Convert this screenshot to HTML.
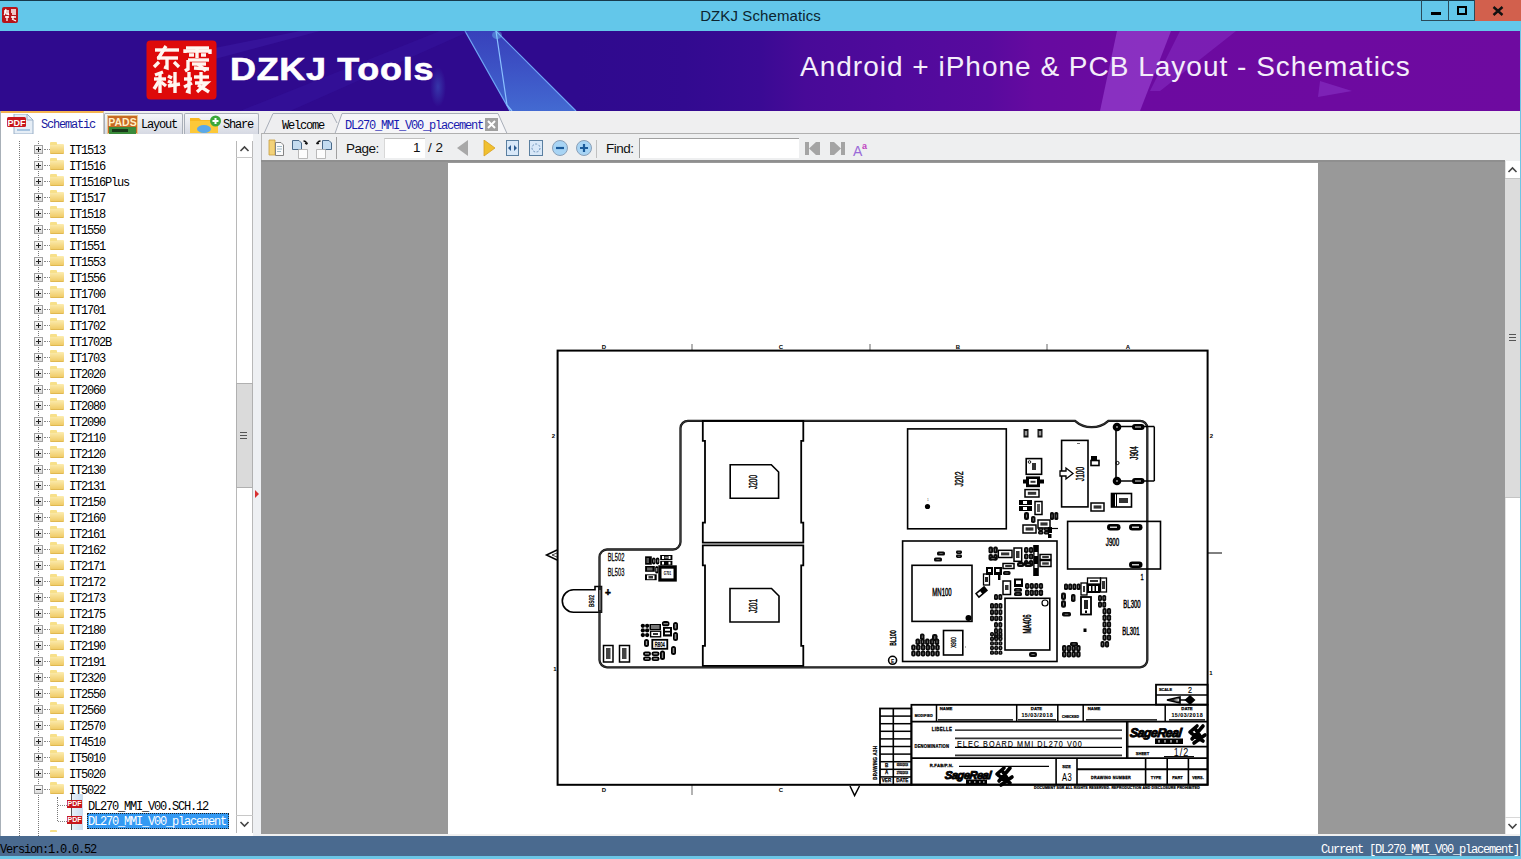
<!DOCTYPE html>
<html><head><meta charset="utf-8"><style>
*{margin:0;padding:0;box-sizing:border-box}
html,body{width:1521px;height:859px;overflow:hidden;background:#f0f0f0;font-family:"Liberation Sans",sans-serif}
.a{position:absolute}
#tb{left:0;top:0;width:1521px;height:31px;background:#63c7ea;border-top:1px solid #173a4c}
#tbt{left:0;top:7px;width:1521px;text-align:center;font-size:15px;color:#0c2430;letter-spacing:0.1px}
.wb{top:0;height:21px;border:1px solid #2a4a5a;border-top:none}
#banner{left:0;top:31px;width:1520px;height:80px;background:linear-gradient(90deg,#2f0a8e 0%,#2f0a8e 38%,#320a90 45%,#3a0a94 50%,#480a98 53%,#500a9c 59%,#580a9e 65%,#660aa0 68%,#6c0aa0 75%,#6e0aa0 100%)}
#rb{left:1520px;top:31px;width:1px;height:828px;background:#6cc6e6}
#tabs{left:0;top:111px;width:1520px;height:23px;background:#efeff0}
.tree{left:0;top:134px;width:253px;height:702px;background:#fff;border-left:1px solid #a8a8a8;overflow:hidden}
.pb{position:absolute;left:34px;width:9px;height:9px;border:1px solid #a0a0a0;background:linear-gradient(#fbfbfb,#dcdcdc)}
.pb .ph{position:absolute;left:1px;top:3px;width:5px;height:1px;background:#222}
.pb .pv{position:absolute;left:3px;top:1px;width:1px;height:5px;background:#222}
.hd{position:absolute;left:44px;width:6px;height:1px;border-top:1px dotted #888}
.hd2{position:absolute;left:58px;width:9px;height:1px;border-top:1px dotted #888}
.fd{position:absolute;left:50px;width:14px;height:10px;background:linear-gradient(#fcecb0,#f0cc68);border-radius:1px;border-bottom:1px solid #e0b850}
.fd i{position:absolute;left:0;top:-2px;width:7px;height:3px;background:#f7e08a;border-radius:1px 1px 0 0}
.tx{position:absolute;left:69px;height:16px;font-family:"Liberation Mono",monospace;font-size:12px;letter-spacing:-1.2px;color:#000;line-height:17px}
.tx2{position:absolute;left:88px;height:16px;font-family:"Liberation Mono",monospace;font-size:12px;letter-spacing:-1.2px;color:#000;line-height:17px}
.sel{background:#3399f3;color:#fff;outline:1px dotted #222;outline-offset:-1px;width:142px;left:87px;padding-left:1px;top:813px!important;height:16px;line-height:19px}
.pdfi{position:absolute;left:67px;width:16px;height:16px}
.pdfi b{position:absolute;left:4px;top:-3px;width:12px;height:20px;background:linear-gradient(90deg,#e8f0f8,#c8dcf0);border-left:1px solid #555}
.pdfi span{position:absolute;left:0;top:3px;width:15px;height:8px;background:#c8161c;color:#fff;font-size:7px;font-weight:bold;line-height:8px;text-align:center}
.vdot{position:absolute;width:1px;border-left:1px dotted #777}
#split{left:253px;top:134px;width:8px;height:702px;background:#eef0f3}
#tool{left:261px;top:133px;width:1259px;height:28px;background:#eeeff0;border-left:1px solid #b8b8b8;border-top:1px solid #b0b0b0}
#doc{left:261px;top:160px;width:1244px;height:674px;background:#999999;border-top:2px solid #8f8f8f}
#page{left:448px;top:163px;width:870px;height:671px;background:#fff}
#vs{left:1505px;top:161px;width:15px;height:673px;background:#fff;border-left:1px solid #e4e4e4}
#status{left:0;top:836px;width:1520px;height:20px;background:#4a6a8f}
#bb{left:0;top:856px;width:1521px;height:3px;background:#6cc6e6}
.st{top:841px;height:18px;line-height:19px;font-family:"Liberation Mono",monospace;font-size:12px;letter-spacing:-1.2px;color:#000}
.tab{top:113px;height:21px;border:1px solid #a8aeb8;border-bottom:none;border-radius:2px 2px 0 0;background:linear-gradient(#f6f7fa,#d6d9e3)}
.tt{font-family:"Liberation Mono",monospace;font-size:12px;letter-spacing:-1.2px;color:#000;line-height:14px}
.tl{font-size:13.5px;color:#111;line-height:16px}
.ibtn{border:1px solid #5a7fa8;background:linear-gradient(#eaf3fb,#bcd6ee)}
</style></head>
<body>
<div id="tb" class="a"></div>
<div id="tbt" class="a">DZKJ Schematics</div>
<svg class="a" style="left:2px;top:7px" width="16" height="16" viewBox="0 0 16 16" ><rect x="0" y="0" width="16" height="16" rx="2" fill="#b8141a"/><g stroke="#fff" stroke-width="1.3" fill="none"><path d="M2 4 H7 M4 2 L3 6 M2 6 H7 M5 6 V8 M3 7 L2 8 M6 7 L7 8"/><path d="M9 3 H14 M9 5 H14 M10 7 H14 M3 10 H7 M5 9 V14 M9 10 H14 M11 9 V13 M10 12 L14 14"/></g></svg>
<div class="a wb" style="left:1421px;width:28px"><div class="a" style="left:9px;top:12px;width:10px;height:3px;background:#000"></div></div>
<div class="a wb" style="left:1448px;width:27px;border-left:1px solid #2a4a5a"><div class="a" style="left:8px;top:6px;width:10px;height:9px;border:2px solid #000"></div></div>
<div class="a" style="left:1475px;top:0;width:46px;height:21px;background:#d2604d"><svg class="a" style="left:17px;top:6px" width="12" height="10" viewBox="0 0 12 10" ><path d="M1.5 1 L10.5 9 M10.5 1 L1.5 9" stroke="#111" stroke-width="2.4"/></svg></div>
<div id="banner" class="a"></div>
<svg class="a" style="left:0px;top:31px" width="1520" height="80" viewBox="0 0 1520 80" >
<defs><radialGradient id="glow" cx="0.5" cy="0.5" r="0.5"><stop offset="0" stop-color="#4aa8f0" stop-opacity="0.8"/><stop offset="1" stop-color="#4aa8f0" stop-opacity="0"/></radialGradient>
<linearGradient id="dg" x1="0" y1="0" x2="0" y2="1"><stop offset="0" stop-color="#3f6ee0" stop-opacity="0.55"/><stop offset="1" stop-color="#4a8ae8" stop-opacity="0.75"/></linearGradient></defs>
<polygon points="465,0 496,0 576,80 510,80" fill="url(#dg)"/>
<polyline points="465,0 510,80" stroke="#6fa6f5" stroke-width="1.2" fill="none"/>
<polyline points="496,0 576,80" stroke="#6fa6f5" stroke-width="1.2" fill="none"/>
<polyline points="496,0 507,74 512,80" stroke="#8ac0ff" stroke-width="1.2" fill="none"/>
<ellipse cx="438" cy="56" rx="8" ry="20" fill="url(#glow)" opacity="0.35"/>
<ellipse cx="497" cy="4" rx="5" ry="4" fill="#7fe0ff" opacity="0.35"/>
<polygon points="1117,0 1171,0 1140,80 1100,80" fill="#b060e8" opacity="0.45"/>
<polygon points="1180,0 1236,0 1160,60 1150,60" fill="#9a50e0" opacity="0.3"/>
<polygon points="1320,50 1352,60 1318,66" fill="#9a50e0" opacity="0.35"/>
<polygon points="150,30 300,0 320,0 170,40" fill="#4a30c0" opacity="0.25"/>
<polygon points="240,80 440,0 470,0 290,80" fill="#3a20b0" opacity="0.25"/>
</svg>
<svg class="a" style="left:146px;top:40px" width="72" height="61" viewBox="0 0 72 61" >
<rect x="0.5" y="0.5" width="70" height="59" rx="4" fill="#de0a0a"/>
<g stroke="#fff6f0" stroke-width="3.4" fill="none" stroke-linecap="butt">
 <!-- 东 -->
 <path d="M9 10 H33"/><path d="M20 6 L12 19"/><path d="M11 18 H32"/><path d="M21 18 V28 L18 27"/><path d="M13 22 L8 27"/><path d="M28 22 L33 27"/>
 <!-- 震 -->
 <path d="M40 8 H63"/><path d="M39 13 V11 H64 V14"/><path d="M51 8 V18"/><path d="M43 15 H48 M55 15 H60"/><path d="M42 20 H63"/><path d="M42 20 V29 L39 31"/><path d="M46 24 H60"/><path d="M48 28 L63 29"/><path d="M52 24 L60 31"/>
 <!-- 科 -->
 <path d="M17 32 L9 35"/><path d="M8 39 H20"/><path d="M14 34 V53"/><path d="M13 41 L8 49"/><path d="M15 42 L20 46"/><path d="M22 36 L26 38 M22 41 L26 43"/><path d="M22 46 L34 44"/><path d="M29 32 V53"/>
 <!-- 技 -->
 <path d="M38 39 H46"/><path d="M43 32 V52 L40 51"/><path d="M38 47 L46 43"/><path d="M48 37 H63"/><path d="M55 32 V42"/><path d="M49 43 H61 L51 52"/><path d="M52 45 L63 52"/>
</g></svg>
<div class="a" id="dzt" style="left:230px;top:50px;font-size:31px;font-weight:bold;color:#fff;line-height:40px;white-space:nowrap;letter-spacing:0.6px;transform:scaleX(1.16);transform-origin:0 0;-webkit-text-stroke:0.6px #fff">DZKJ Tools</div>
<div class="a" id="apt" style="left:800px;top:50px;font-size:28px;color:#f4eefa;line-height:34px;white-space:nowrap;letter-spacing:1.0px">Android + iPhone &amp; PCB Layout - Schematics</div>
<div id="rb" class="a"></div>
<div id="tabs" class="a"></div>
<div class="a" style="left:1px;top:111px;width:103px;height:24px;background:#fff;border-top:2px solid #f4b450;border-right:1px solid #c8c8c8"></div>
<svg class="a" style="left:7px;top:114px" width="30" height="22" viewBox="0 0 30 22" ><path d="M7 0 H20 L26 6 V20 H7 Z" fill="#e6eef6" stroke="#9ab0c8" stroke-width="1"/><path d="M20 0 V6 H26" fill="none" stroke="#9ab0c8"/>
<rect x="0" y="3" width="19" height="10" rx="1.5" fill="#c8161c"/><text x="9.5" y="11.5" text-anchor="middle" font-size="9" font-weight="bold" fill="#fff" font-family="Liberation Sans">PDF</text>
<path d="M10 16 H23" stroke="#a8c4e0" stroke-width="2"/></svg>
<div class="a tt" style="left:41px;top:118px;color:#1a1aa0">Schematic</div>
<div class="a tab" style="left:104px;width:79px"></div>
<svg class="a" style="left:107px;top:115px" width="31" height="19" viewBox="0 0 31 19" ><rect x="0.5" y="0.5" width="30" height="18" fill="#c86a24" stroke="#e8c890"/><text x="15.5" y="11" text-anchor="middle" font-size="10.5" font-weight="bold" fill="#fff0c8" font-family="Liberation Sans">PADS</text>
<rect x="2" y="12" width="27" height="7" fill="#3a8a3a"/><rect x="5" y="14" width="16" height="3" fill="#1a3a1a"/></svg>
<div class="a tt" style="left:141px;top:118px">Layout</div>
<div class="a tab" style="left:184px;width:75px"></div>
<svg class="a" style="left:190px;top:115px" width="32" height="19" viewBox="0 0 32 19" ><path d="M0 3 H9 L11 5 H28 V18 H0 Z" fill="#f8b820"/><path d="M0 6 H28 V18 H0 Z" fill="#fcc838"/>
<ellipse cx="14" cy="14" rx="7" ry="4" fill="#5aa8e8"/><circle cx="25.5" cy="6" r="5.5" fill="#3aa83a"/><path d="M25.5 3 V9 M22.5 6 H28.5" stroke="#fff" stroke-width="2"/></svg>
<div class="a tt" style="left:223px;top:118px">Share</div>
<svg class="a" style="left:263px;top:113px" width="250" height="22" viewBox="0 0 250 22" ><path d="M1 20.5 L10 0.5 H69 L74 10" fill="#eeeef0" stroke="#a8aeb8" stroke-width="1"/>
<path d="M72 20.5 L79 0.5 H235 L244 20.5" fill="#f6f6f8" stroke="#a8aeb8" stroke-width="1"/>
<rect x="222" y="5" width="13" height="13" fill="#a0a0a0"/><path d="M225 8 L232 15 M232 8 L225 15" stroke="#fff" stroke-width="2"/></svg>
<div class="a tt" style="left:282px;top:119px">Welcome</div>
<div class="a tt" style="left:345px;top:119px;color:#1a1ab0">DL270_MMI_V00_placement</div>
<div class="tree a">
<div class="vdot" style="left:18px;top:7px;height:695px"></div>
<div class="vdot" style="left:37px;top:7px;height:695px"></div>
<div class="vdot" style="left:56px;top:663px;height:24px"></div>
</div>
<div class="a" style="left:0;top:0;width:236px;height:832px;overflow:hidden"><div class="pb" style="top:145px"><i class="ph"></i><i class="pv"></i></div>
<div class="hd" style="top:149px"></div>
<div class="fd" style="top:144px"><i></i></div>
<div class="tx" style="top:143px">IT1513</div>
<div class="pb" style="top:161px"><i class="ph"></i><i class="pv"></i></div>
<div class="hd" style="top:165px"></div>
<div class="fd" style="top:160px"><i></i></div>
<div class="tx" style="top:159px">IT1516</div>
<div class="pb" style="top:177px"><i class="ph"></i><i class="pv"></i></div>
<div class="hd" style="top:181px"></div>
<div class="fd" style="top:176px"><i></i></div>
<div class="tx" style="top:175px">IT1516Plus</div>
<div class="pb" style="top:193px"><i class="ph"></i><i class="pv"></i></div>
<div class="hd" style="top:197px"></div>
<div class="fd" style="top:192px"><i></i></div>
<div class="tx" style="top:191px">IT1517</div>
<div class="pb" style="top:209px"><i class="ph"></i><i class="pv"></i></div>
<div class="hd" style="top:213px"></div>
<div class="fd" style="top:208px"><i></i></div>
<div class="tx" style="top:207px">IT1518</div>
<div class="pb" style="top:225px"><i class="ph"></i><i class="pv"></i></div>
<div class="hd" style="top:229px"></div>
<div class="fd" style="top:224px"><i></i></div>
<div class="tx" style="top:223px">IT1550</div>
<div class="pb" style="top:241px"><i class="ph"></i><i class="pv"></i></div>
<div class="hd" style="top:245px"></div>
<div class="fd" style="top:240px"><i></i></div>
<div class="tx" style="top:239px">IT1551</div>
<div class="pb" style="top:257px"><i class="ph"></i><i class="pv"></i></div>
<div class="hd" style="top:261px"></div>
<div class="fd" style="top:256px"><i></i></div>
<div class="tx" style="top:255px">IT1553</div>
<div class="pb" style="top:273px"><i class="ph"></i><i class="pv"></i></div>
<div class="hd" style="top:277px"></div>
<div class="fd" style="top:272px"><i></i></div>
<div class="tx" style="top:271px">IT1556</div>
<div class="pb" style="top:289px"><i class="ph"></i><i class="pv"></i></div>
<div class="hd" style="top:293px"></div>
<div class="fd" style="top:288px"><i></i></div>
<div class="tx" style="top:287px">IT1700</div>
<div class="pb" style="top:305px"><i class="ph"></i><i class="pv"></i></div>
<div class="hd" style="top:309px"></div>
<div class="fd" style="top:304px"><i></i></div>
<div class="tx" style="top:303px">IT1701</div>
<div class="pb" style="top:321px"><i class="ph"></i><i class="pv"></i></div>
<div class="hd" style="top:325px"></div>
<div class="fd" style="top:320px"><i></i></div>
<div class="tx" style="top:319px">IT1702</div>
<div class="pb" style="top:337px"><i class="ph"></i><i class="pv"></i></div>
<div class="hd" style="top:341px"></div>
<div class="fd" style="top:336px"><i></i></div>
<div class="tx" style="top:335px">IT1702B</div>
<div class="pb" style="top:353px"><i class="ph"></i><i class="pv"></i></div>
<div class="hd" style="top:357px"></div>
<div class="fd" style="top:352px"><i></i></div>
<div class="tx" style="top:351px">IT1703</div>
<div class="pb" style="top:369px"><i class="ph"></i><i class="pv"></i></div>
<div class="hd" style="top:373px"></div>
<div class="fd" style="top:368px"><i></i></div>
<div class="tx" style="top:367px">IT2020</div>
<div class="pb" style="top:385px"><i class="ph"></i><i class="pv"></i></div>
<div class="hd" style="top:389px"></div>
<div class="fd" style="top:384px"><i></i></div>
<div class="tx" style="top:383px">IT2060</div>
<div class="pb" style="top:401px"><i class="ph"></i><i class="pv"></i></div>
<div class="hd" style="top:405px"></div>
<div class="fd" style="top:400px"><i></i></div>
<div class="tx" style="top:399px">IT2080</div>
<div class="pb" style="top:417px"><i class="ph"></i><i class="pv"></i></div>
<div class="hd" style="top:421px"></div>
<div class="fd" style="top:416px"><i></i></div>
<div class="tx" style="top:415px">IT2090</div>
<div class="pb" style="top:433px"><i class="ph"></i><i class="pv"></i></div>
<div class="hd" style="top:437px"></div>
<div class="fd" style="top:432px"><i></i></div>
<div class="tx" style="top:431px">IT2110</div>
<div class="pb" style="top:449px"><i class="ph"></i><i class="pv"></i></div>
<div class="hd" style="top:453px"></div>
<div class="fd" style="top:448px"><i></i></div>
<div class="tx" style="top:447px">IT2120</div>
<div class="pb" style="top:465px"><i class="ph"></i><i class="pv"></i></div>
<div class="hd" style="top:469px"></div>
<div class="fd" style="top:464px"><i></i></div>
<div class="tx" style="top:463px">IT2130</div>
<div class="pb" style="top:481px"><i class="ph"></i><i class="pv"></i></div>
<div class="hd" style="top:485px"></div>
<div class="fd" style="top:480px"><i></i></div>
<div class="tx" style="top:479px">IT2131</div>
<div class="pb" style="top:497px"><i class="ph"></i><i class="pv"></i></div>
<div class="hd" style="top:501px"></div>
<div class="fd" style="top:496px"><i></i></div>
<div class="tx" style="top:495px">IT2150</div>
<div class="pb" style="top:513px"><i class="ph"></i><i class="pv"></i></div>
<div class="hd" style="top:517px"></div>
<div class="fd" style="top:512px"><i></i></div>
<div class="tx" style="top:511px">IT2160</div>
<div class="pb" style="top:529px"><i class="ph"></i><i class="pv"></i></div>
<div class="hd" style="top:533px"></div>
<div class="fd" style="top:528px"><i></i></div>
<div class="tx" style="top:527px">IT2161</div>
<div class="pb" style="top:545px"><i class="ph"></i><i class="pv"></i></div>
<div class="hd" style="top:549px"></div>
<div class="fd" style="top:544px"><i></i></div>
<div class="tx" style="top:543px">IT2162</div>
<div class="pb" style="top:561px"><i class="ph"></i><i class="pv"></i></div>
<div class="hd" style="top:565px"></div>
<div class="fd" style="top:560px"><i></i></div>
<div class="tx" style="top:559px">IT2171</div>
<div class="pb" style="top:577px"><i class="ph"></i><i class="pv"></i></div>
<div class="hd" style="top:581px"></div>
<div class="fd" style="top:576px"><i></i></div>
<div class="tx" style="top:575px">IT2172</div>
<div class="pb" style="top:593px"><i class="ph"></i><i class="pv"></i></div>
<div class="hd" style="top:597px"></div>
<div class="fd" style="top:592px"><i></i></div>
<div class="tx" style="top:591px">IT2173</div>
<div class="pb" style="top:609px"><i class="ph"></i><i class="pv"></i></div>
<div class="hd" style="top:613px"></div>
<div class="fd" style="top:608px"><i></i></div>
<div class="tx" style="top:607px">IT2175</div>
<div class="pb" style="top:625px"><i class="ph"></i><i class="pv"></i></div>
<div class="hd" style="top:629px"></div>
<div class="fd" style="top:624px"><i></i></div>
<div class="tx" style="top:623px">IT2180</div>
<div class="pb" style="top:641px"><i class="ph"></i><i class="pv"></i></div>
<div class="hd" style="top:645px"></div>
<div class="fd" style="top:640px"><i></i></div>
<div class="tx" style="top:639px">IT2190</div>
<div class="pb" style="top:657px"><i class="ph"></i><i class="pv"></i></div>
<div class="hd" style="top:661px"></div>
<div class="fd" style="top:656px"><i></i></div>
<div class="tx" style="top:655px">IT2191</div>
<div class="pb" style="top:673px"><i class="ph"></i><i class="pv"></i></div>
<div class="hd" style="top:677px"></div>
<div class="fd" style="top:672px"><i></i></div>
<div class="tx" style="top:671px">IT2320</div>
<div class="pb" style="top:689px"><i class="ph"></i><i class="pv"></i></div>
<div class="hd" style="top:693px"></div>
<div class="fd" style="top:688px"><i></i></div>
<div class="tx" style="top:687px">IT2550</div>
<div class="pb" style="top:705px"><i class="ph"></i><i class="pv"></i></div>
<div class="hd" style="top:709px"></div>
<div class="fd" style="top:704px"><i></i></div>
<div class="tx" style="top:703px">IT2560</div>
<div class="pb" style="top:721px"><i class="ph"></i><i class="pv"></i></div>
<div class="hd" style="top:725px"></div>
<div class="fd" style="top:720px"><i></i></div>
<div class="tx" style="top:719px">IT2570</div>
<div class="pb" style="top:737px"><i class="ph"></i><i class="pv"></i></div>
<div class="hd" style="top:741px"></div>
<div class="fd" style="top:736px"><i></i></div>
<div class="tx" style="top:735px">IT4510</div>
<div class="pb" style="top:753px"><i class="ph"></i><i class="pv"></i></div>
<div class="hd" style="top:757px"></div>
<div class="fd" style="top:752px"><i></i></div>
<div class="tx" style="top:751px">IT5010</div>
<div class="pb" style="top:769px"><i class="ph"></i><i class="pv"></i></div>
<div class="hd" style="top:773px"></div>
<div class="fd" style="top:768px"><i></i></div>
<div class="tx" style="top:767px">IT5020</div>
<div class="pb" style="top:785px"><i class="ph"></i></div>
<div class="hd" style="top:789px"></div>
<div class="fd" style="top:784px"><i></i></div>
<div class="tx" style="top:783px">IT5022</div>
<div class="pb" style="top:833px"><i class="ph"></i><i class="pv"></i></div>
<div class="hd" style="top:837px"></div>
<div class="fd" style="top:832px"><i></i></div>
<div class="tx" style="top:831px">IT5030</div>
<div class="hd2" style="top:805px"></div>
<div class="pdfi" style="top:797px"><b></b><span>PDF</span></div>
<div class="tx2" style="top:799px">DL270_MMI_V00.SCH.12</div>
<div class="hd2" style="top:821px"></div>
<div class="pdfi" style="top:813px"><b></b><span>PDF</span></div>
<div class="tx2 sel" style="top:815px">DL270_MMI_V00_placement</div></div>
<div id="split" class="a"></div>
<div class="a" style="left:0;top:111px;width:1px;height:725px;background:#a8b0b8"></div>
<div id="tool" class="a"></div>
<svg class="a" style="left:268px;top:137px" width="80" height="25" viewBox="0 0 80 25" >
<path d="M1 3 H7 V18 H1 Z" fill="#f2d27a" stroke="#c8a040" stroke-width="0.8"/><path d="M7.5 5.5 H13 L15.5 8 V18.5 H7.5 Z" fill="#fafafa" stroke="#777" stroke-width="0.9"/><path d="M9 9.5 H14 M9 12 H14 M9 14.5 H13" stroke="#8ab" stroke-width="0.8"/>
<path d="M24.5 3.5 H31 L33.5 6 V12.5 H24.5 Z" fill="#c4dcf0" stroke="#4a6a8a" stroke-width="1"/><path d="M30.5 12.5 H39.5 V21.5 H30.5 Z" fill="#fcfcfc" stroke="#aaa" stroke-width="0.8"/><path d="M35.5 4 Q38.5 4 38.5 7 L37 6.2 M38.5 7 L39.6 5.8" stroke="#111" fill="none" stroke-width="1.3"/>
<path d="M54.5 3.5 H61 L63.5 6 V12.5 H54.5 Z" fill="#c4dcf0" stroke="#4a6a8a" stroke-width="1"/><path d="M48.5 12.5 H57.5 V21.5 H48.5 Z" fill="#fcfcfc" stroke="#aaa" stroke-width="0.8"/><path d="M52.5 4 Q49.5 4 49.5 7 M49.5 7 L48.4 5.8 M49.5 7 L51 6.2" stroke="#111" fill="none" stroke-width="1.3"/>
<path d="M68.5 -1 V22" stroke="#a0a0a0"/>
</svg>
<div class="a tl" style="left:346px;top:141px;letter-spacing:-0.5px">Page:</div>
<div class="a" style="left:384px;top:138px;width:41px;height:20px;background:#fff;border-top:1px solid #c0c0c0;border-left:1px solid #d8d8d8"></div>
<div class="a tl" style="left:413px;top:140px">1</div>
<div class="a tl" style="left:428px;top:140px">/ 2</div>
<svg class="a" style="left:457px;top:140px" width="145" height="18" viewBox="0 0 145 18" >
<path d="M0 8 L11 0 V16 Z" fill="#a8a8a8"/>
<path d="M27 0 L38 8 L27 16 Z" fill="#f0c030" stroke="#d8a020" stroke-width="0.8"/>
<rect x="49.5" y="0.5" width="12" height="15" fill="#d8e8f8" stroke="#5a7fa0"/><path d="M51 8 L54 5 V11 Z M60 8 L57 5 V11 Z" fill="#2a5a90"/>
<rect x="72.5" y="0.5" width="13" height="15" fill="#d8e8f8" stroke="#5a7fa0"/><circle cx="79" cy="8" r="4" fill="none" stroke="#6a90b8" stroke-dasharray="2 1.5"/>
<circle cx="103" cy="8" r="7.5" fill="#a8d4f4" stroke="#8aa0b8"/><path d="M99 8 H107" stroke="#1a5a9a" stroke-width="2.2"/>
<circle cx="127" cy="8" r="7.5" fill="#a8d4f4" stroke="#8aa0b8"/><path d="M123 8 H131 M127 4 V12" stroke="#1a5a9a" stroke-width="2.2"/>
<path d="M139.5 -3 V20" stroke="#c0c0c0"/>
</svg>
<div class="a tl" style="left:606px;top:141px;letter-spacing:-0.5px">Find:</div>
<div class="a" style="left:639px;top:138px;width:160px;height:20px;background:#fff;border-top:1px solid #a0a0a0;border-left:1px solid #a0a0a0"></div>
<svg class="a" style="left:805px;top:140px" width="70" height="18" viewBox="0 0 70 18" >
<path d="M0 2 H4 V15 H0 Z M4 8.5 L11 2 H15 V15 H11 Z" fill="#a4a4a4"/>
<path d="M40 2 H36 V15 H40 Z M36 8.5 L29 2 H25 V15 H29 Z" fill="#a4a4a4"/>
<text x="48" y="16" font-size="14" fill="#9a6ad8" font-family="Liberation Sans">A</text><text x="57" y="9" font-size="9" fill="#c040c0" font-family="Liberation Sans" font-weight="bold">a</text>
</svg>
<div id="doc" class="a"></div>
<div id="page" class="a"></div>
<div class="a" style="left:236px;top:141px;width:17px;height:692px;background:#fff;border-left:1px solid #b8b8b8;border-right:1px solid #b8b8b8"></div>
<div class="a" style="left:236px;top:157px;width:17px;height:1px;background:#c8c8c8"></div>
<div class="a" style="left:236px;top:383px;width:17px;height:105px;background:#dadada;border:1px solid #b0b0b0"></div>
<div class="a" style="left:240px;top:432px;width:7px;height:7px;border-top:1px solid #555;border-bottom:1px solid #555"><i class="a" style="left:0;top:2px;width:7px;height:1px;background:#555"></i></div>
<div class="a" style="left:236px;top:815px;width:17px;height:1px;background:#c8c8c8"></div>
<svg class="a" style="left:236px;top:141px" width="17" height="16" viewBox="0 0 17 16" ><path d="M4.5 10 L8.5 6 L12.5 10" stroke="#444" stroke-width="1.6" fill="none"/></svg>
<svg class="a" style="left:236px;top:816px" width="17" height="16" viewBox="0 0 17 16" ><path d="M4.5 6 L8.5 10 L12.5 6" stroke="#444" stroke-width="1.6" fill="none"/></svg>
<svg class="a" style="left:254px;top:489px" width="6" height="10" viewBox="0 0 6 10" ><path d="M1 1 L5 5 L1 9 Z" fill="#d83030"/></svg>
<div id="vs" class="a"></div>
<div class="a" style="left:1505px;top:178px;width:15px;height:320px;background:#dcdcdc;border-top:1px solid #c4c4c4;border-bottom:1px solid #c4c4c4"></div>
<div class="a" style="left:1509px;top:334px;width:7px;height:7px;border-top:1px solid #555;border-bottom:1px solid #555"><i class="a" style="left:0;top:2px;width:7px;height:1px;background:#555"></i></div>
<svg class="a" style="left:1505px;top:162px" width="15" height="16" viewBox="0 0 15 16" ><path d="M3.5 10 L7.5 6 L11.5 10" stroke="#444" stroke-width="1.6" fill="none"/></svg>
<svg class="a" style="left:1505px;top:818px" width="15" height="16" viewBox="0 0 15 16" ><path d="M3.5 6 L7.5 10 L11.5 6" stroke="#444" stroke-width="1.6" fill="none"/></svg>
<div class="a" style="left:1505px;top:817px;width:15px;height:1px;background:#d8d8d8"></div>
<div id="status" class="a"></div>
<div id="bb" class="a"></div>
<div class="a st" style="left:0">Version:1.0.0.52</div>
<div class="a st" style="left:1321px;color:#fff">Current [DL270_MMI_V00_placement]</div>
<svg class="a" style="left:448px;top:162px" width="870" height="672" viewBox="448 162 870 672"><rect x="557.6" y="350.6" width="649.9999999999999" height="434.19999999999993" fill="none" stroke="#000" stroke-width="2.0"/>
<line x1="692" y1="344" x2="692" y2="351" stroke="#000" stroke-width="0.6"/>
<line x1="870" y1="344" x2="870" y2="351" stroke="#000" stroke-width="0.6"/>
<line x1="1047" y1="344" x2="1047" y2="351" stroke="#000" stroke-width="0.6"/>
<line x1="692" y1="785" x2="692" y2="795" stroke="#000" stroke-width="0.6"/>
<text transform="translate(604 347)" font-size="6" text-anchor="middle" dominant-baseline="central" font-weight="bold" fill="#000" font-family="Liberation Sans">D</text>
<text transform="translate(781 347)" font-size="6" text-anchor="middle" dominant-baseline="central" font-weight="bold" fill="#000" font-family="Liberation Sans">C</text>
<text transform="translate(958 347)" font-size="6" text-anchor="middle" dominant-baseline="central" font-weight="bold" fill="#000" font-family="Liberation Sans">B</text>
<text transform="translate(1128 347)" font-size="6" text-anchor="middle" dominant-baseline="central" font-weight="bold" fill="#000" font-family="Liberation Sans">A</text>
<text transform="translate(604 789.5)" font-size="6" text-anchor="middle" dominant-baseline="central" font-weight="bold" fill="#000" font-family="Liberation Sans">D</text>
<text transform="translate(781 789.5)" font-size="6" text-anchor="middle" dominant-baseline="central" font-weight="bold" fill="#000" font-family="Liberation Sans">C</text>
<text transform="translate(553.5 436)" font-size="6" text-anchor="middle" dominant-baseline="central" font-weight="bold" fill="#000" font-family="Liberation Sans">2</text>
<text transform="translate(1211.5 436)" font-size="6" text-anchor="middle" dominant-baseline="central" font-weight="bold" fill="#000" font-family="Liberation Sans">2</text>
<text transform="translate(555 669)" font-size="6" text-anchor="middle" dominant-baseline="central" font-weight="bold" fill="#000" font-family="Liberation Sans">1</text>
<text transform="translate(1211 673)" font-size="6" text-anchor="middle" dominant-baseline="central" font-weight="bold" fill="#000" font-family="Liberation Sans">1</text>
<path d="M557 550 L546.5 555 L557 560" fill="none" stroke="#000" stroke-width="1.5"/>
<path d="M557 553 L552 555 L557 557" fill="none" stroke="#000" stroke-width="0.7"/>
<line x1="1207" y1="553" x2="1222" y2="553" stroke="#000" stroke-width="1.0"/>
<path d="M850 786 L854.6 795.5 L859.5 786" fill="none" stroke="#000" stroke-width="1.5"/>
<path d="M680.5 428 A7.5 7.5 0 0 1 688 420.8 L1075 420.8 A25 25 0 0 0 1108.4 420.8 L1140 420.8 A7.3 7.3 0 0 1 1147.3 428 L1147.3 660 A7.3 7.3 0 0 1 1140 667.3 L607 667.3 A7.5 7.5 0 0 1 599.5 660 L599.5 557 A7.5 7.5 0 0 1 607 549.5 L673 549.5 A7.5 7.5 0 0 0 680.5 542 Z" fill="none" stroke="#111" stroke-width="2.3"/>
<path d="M680.5 428 A7.5 7.5 0 0 1 688 420.8 L1075 420.8 A25 25 0 0 0 1108.4 420.8 L1140 420.8 A7.3 7.3 0 0 1 1147.3 428 L1147.3 660 A7.3 7.3 0 0 1 1140 667.3 L607 667.3 A7.5 7.5 0 0 1 599.5 660 L599.5 557 A7.5 7.5 0 0 1 607 549.5 L673 549.5 A7.5 7.5 0 0 0 680.5 542 Z" fill="none" stroke="#666" stroke-width="0.45"/>
<path d="M702.8 420.8 V440.8 H705 V522.7 H702.8 V542.7 H803.3 V522.7 H801.2 V440.8 H803.3 V420.8 Z" fill="none" stroke="#000" stroke-width="1.8"/>
<path d="M702.8 545.3 V565.3 H705 V645.8 H702.8 V665.8 H803.3 V645.8 H801.2 V565.3 H803.3 V545.3 Z" fill="none" stroke="#000" stroke-width="1.8"/>
<path d="M730.2 464.7 H771.3 L778.6 472 V498.2 H730.2 Z" fill="none" stroke="#000" stroke-width="1.6"/>
<text transform="translate(753.8 482) rotate(-90) scale(0.62 1)" font-size="10.5" text-anchor="middle" dominant-baseline="central" font-weight="normal" fill="#000" font-family="Liberation Sans" stroke="#000" stroke-width="0.4">J200</text>
<path d="M730 588.5 H771.5 L779 596 V622 H730 Z" fill="none" stroke="#000" stroke-width="1.6"/>
<text transform="translate(753.8 606) rotate(-90) scale(0.62 1)" font-size="10.5" text-anchor="middle" dominant-baseline="central" font-weight="normal" fill="#000" font-family="Liberation Sans" stroke="#000" stroke-width="0.4">J201</text>
<path d="M601.5 612.2 H573.5 A11.2 11.2 0 0 1 573.5 589.8 H595 V586.5 H601.5 Z" fill="none" stroke="#000" stroke-width="1.6"/>
<rect x="598" y="586.5" width="3.7999999999999545" height="26.0" fill="#222"/>
<rect x="599.2" y="590" width="1.3999999999999773" height="20" fill="#888"/>
<text transform="translate(590.5 601) rotate(-90) scale(0.62 1)" font-size="8" text-anchor="middle" dominant-baseline="central" font-weight="normal" fill="#000" font-family="Liberation Sans" stroke="#000" stroke-width="0.35">BS02</text>
<text transform="translate(608 592)" font-size="10" text-anchor="middle" dominant-baseline="central" font-weight="bold" fill="#000" font-family="Liberation Sans" stroke="#000" stroke-width="0.5">+</text>
<text transform="translate(616 556.8) scale(0.55 1)" font-size="10.5" text-anchor="middle" dominant-baseline="central" font-weight="normal" fill="#000" font-family="Liberation Sans" stroke="#000" stroke-width="0.25">BL502</text>
<text transform="translate(616 572.3) scale(0.55 1)" font-size="10.5" text-anchor="middle" dominant-baseline="central" font-weight="normal" fill="#000" font-family="Liberation Sans" stroke="#000" stroke-width="0.25">BL503</text>
<rect x="645.1" y="556.3" width="6.699999999999932" height="8.400000000000091" fill="#000"/>
<rect x="646.5" y="558" width="2.5" height="5" fill="#555"/>
<rect x="652" y="557.5" width="3.5" height="7.0" rx="1.75" fill="#000"/>
<rect x="655.8" y="557.5" width="3.5" height="7.0" rx="1.75" fill="#000"/>
<rect x="653" y="559.5" width="1.5" height="3.0" fill="#777"/>
<rect x="657" y="559.5" width="1.2999999999999545" height="3.0" fill="#777"/>
<rect x="660.2" y="555" width="12.199999999999932" height="5" fill="#000"/>
<rect x="662" y="556" width="2" height="3" fill="#fff"/>
<rect x="668.5" y="556" width="2.0" height="3" fill="#fff"/>
<rect x="664.5" y="556.5" width="3.5" height="2.0" fill="#888"/>
<rect x="660.2" y="560.8" width="12.199999999999932" height="4.5" fill="#000"/>
<rect x="662" y="561.8" width="2" height="2.7000000000000455" fill="#fff"/>
<rect x="668.5" y="561.8" width="2.0" height="2.7000000000000455" fill="#fff"/>
<rect x="645.1" y="566" width="9.699999999999932" height="5.7999999999999545" fill="#000"/>
<rect x="647" y="567.5" width="5.5" height="3.0" fill="#666"/>
<rect x="655.2" y="566" width="3.099999999999909" height="7.5" rx="1.5499999999999545" fill="#000"/>
<rect x="656.2" y="568" width="1.099999999999909" height="3.5" fill="#aaa"/>
<rect x="645" y="574.3" width="11.700000000000045" height="5.900000000000091" fill="#000"/>
<rect x="647" y="575.3" width="7.5" height="3.900000000000091" fill="#fff"/>
<rect x="648.5" y="576" width="4.5" height="2.5" fill="#333"/>
<rect x="658.3" y="565.3" width="18.5" height="16.300000000000068" fill="#000"/>
<rect x="661.5" y="568.7" width="12.0" height="9.699999999999932" fill="#fff"/>
<text transform="translate(667.5 573.6) scale(0.6 1)" font-size="5" text-anchor="middle" dominant-baseline="central" font-weight="bold" fill="#000" font-family="Liberation Sans">G701</text>
<rect x="640.7" y="623.7" width="4.2999999999999545" height="4.2999999999999545" rx="2.1499999999999773" fill="#000"/>
<rect x="645" y="623.7" width="4.2999999999999545" height="4.2999999999999545" rx="2.1499999999999773" fill="#000"/>
<rect x="640.7" y="628.3000000000001" width="4.2999999999999545" height="4.2999999999999545" rx="2.1499999999999773" fill="#000"/>
<rect x="645" y="628.3000000000001" width="4.2999999999999545" height="4.2999999999999545" rx="2.1499999999999773" fill="#000"/>
<rect x="640.7" y="632.9000000000001" width="4.2999999999999545" height="4.2999999999999545" rx="2.1499999999999773" fill="#000"/>
<rect x="645" y="632.9000000000001" width="4.2999999999999545" height="4.2999999999999545" rx="2.1499999999999773" fill="#000"/>
<rect x="649.5" y="624" width="11.5" height="6" fill="#000"/>
<rect x="651" y="625" width="8.5" height="4" fill="#777"/>
<rect x="650.6" y="631.2" width="10.0" height="5.599999999999909" fill="none" stroke="#000" stroke-width="1.4"/>
<rect x="653" y="633" width="5" height="2" fill="#333"/>
<rect x="661.9" y="621" width="7.600000000000023" height="5.2999999999999545" rx="2.6499999999999773" fill="#000"/>
<rect x="663.5" y="623" width="4.5" height="1.2999999999999545" fill="#888"/>
<rect x="663" y="627" width="9" height="9.5" fill="#000"/>
<rect x="665" y="628.8" width="5" height="2.0" fill="#fff"/>
<rect x="665" y="632.5" width="5" height="1.7999999999999545" fill="#fff"/>
<rect x="673" y="622" width="5" height="8.5" rx="2.5" fill="#000"/>
<rect x="674.7" y="624" width="1.599999999999909" height="4.5" fill="#888"/>
<rect x="673" y="632" width="5" height="9" rx="2.5" fill="#000"/>
<rect x="674.7" y="634" width="1.599999999999909" height="5" fill="#888"/>
<rect x="644" y="639" width="5" height="8" rx="2.5" fill="#000"/>
<rect x="645.8" y="641" width="1.400000000000091" height="4" fill="#999"/>
<rect x="652.3" y="639.8" width="15" height="9" fill="none" stroke="#000" stroke-width="1.8"/>
<text transform="translate(659.8 644.4) scale(0.55 1)" font-size="7.5" text-anchor="middle" dominant-baseline="central" font-weight="normal" fill="#000" font-family="Liberation Sans" stroke="#000" stroke-width="0.35">R804</text>
<rect x="671" y="646" width="5" height="9" rx="2.5" fill="#000"/>
<rect x="672.7" y="648" width="1.599999999999909" height="5" fill="#888"/>
<rect x="643" y="651.5" width="8" height="4.5" rx="2.25" fill="#000"/>
<rect x="651.5" y="651.5" width="8.0" height="4.5" rx="2.25" fill="#000"/>
<rect x="645" y="653" width="4" height="1.5" fill="#888"/>
<rect x="653.5" y="653" width="4.0" height="1.5" fill="#888"/>
<rect x="643" y="656.5" width="8" height="4.5" rx="2.25" fill="#000"/>
<rect x="651.5" y="656.5" width="8.0" height="4.5" rx="2.25" fill="#000"/>
<rect x="645" y="658" width="4" height="1.5" fill="#888"/>
<rect x="653.5" y="658" width="4.0" height="1.5" fill="#888"/>
<rect x="660" y="650.5" width="5" height="9.5" rx="2.5" fill="#000"/>
<rect x="661.8" y="652.5" width="1.400000000000091" height="5.5" fill="#888"/>
<rect x="603.5" y="645.5" width="9.5" height="16.5" fill="none" stroke="#000" stroke-width="1.5"/>
<rect x="606" y="648" width="4.5" height="11" fill="#444"/>
<rect x="619.5" y="645.5" width="10.0" height="16.5" fill="none" stroke="#000" stroke-width="1.5"/>
<rect x="622" y="648" width="4.5" height="11" fill="#444"/>
<rect x="907.6" y="428.9" width="98.69999999999993" height="99.89999999999998" fill="none" stroke="#000" stroke-width="1.6"/>
<text transform="translate(959.5 479) rotate(-90) scale(0.66 1)" font-size="10.5" text-anchor="middle" dominant-baseline="central" font-weight="normal" fill="#000" font-family="Liberation Sans" stroke="#000" stroke-width="0.4">J202</text>
<circle cx="927.5" cy="506.5" r="2.6" fill="#000"/>
<text transform="translate(928 499.5) scale(0.6 1)" font-size="4" text-anchor="middle" dominant-baseline="central" font-weight="normal" fill="#000" font-family="Liberation Sans">1</text>
<rect x="1023.5" y="429" width="5.0" height="8.5" fill="#111"/>
<rect x="1024.8" y="431" width="2.400000000000091" height="4.5" fill="#999"/>
<rect x="1037.5" y="429" width="5.0" height="8.5" fill="#111"/>
<rect x="1038.8" y="431" width="2.400000000000091" height="4.5" fill="#999"/>
<rect x="1061.6" y="440.4" width="26.40000000000009" height="66.5" fill="none" stroke="#000" stroke-width="1.6"/>
<text transform="translate(1080.3 474) rotate(-90) scale(0.66 1)" font-size="10" text-anchor="middle" dominant-baseline="central" font-weight="normal" fill="#000" font-family="Liberation Sans" stroke="#000" stroke-width="0.4">J100</text>
<path d="M1060 471 H1066 V468 L1073 473.5 L1066 479 V476 H1060 Z" fill="#fff" stroke="#000" stroke-width="1.3"/>
<line x1="1077" y1="443.5" x2="1080" y2="443.5" stroke="#000" stroke-width="0.6"/>
<rect x="1091" y="456" width="6" height="4.5" fill="#000"/>
<rect x="1091" y="460.5" width="8" height="5.0" fill="none" stroke="#000" stroke-width="1.6"/>
<rect x="1091" y="503" width="13" height="8" fill="none" stroke="#000" stroke-width="1.5"/>
<rect x="1093.6" y="505.4" width="7.8" height="3.2" fill="#333"/>
<rect x="1111.5" y="493.5" width="20.0" height="13.5" fill="none" stroke="#000" stroke-width="1.6"/>
<rect x="1112" y="494" width="3" height="13" fill="#000"/>
<rect x="1116" y="494" width="1" height="13" fill="#000"/>
<rect x="1119" y="498" width="9" height="5" fill="#333"/>
<line x1="1116" y1="427" x2="1116" y2="481" stroke="#000" stroke-width="1.6"/>
<line x1="1116" y1="426.6" x2="1154.3" y2="426.6" stroke="#000" stroke-width="1.5"/>
<line x1="1116" y1="481" x2="1154.3" y2="481" stroke="#000" stroke-width="1.5"/>
<line x1="1154.3" y1="426.6" x2="1154.3" y2="481" stroke="#000" stroke-width="1.5"/>
<circle cx="1117" cy="427" r="4.3" fill="#000"/><circle cx="1117" cy="481" r="4.3" fill="#000"/><circle cx="1117" cy="427" r="0.9" fill="#aaa"/><circle cx="1117" cy="481" r="0.9" fill="#aaa"/>
<rect x="1132" y="424" width="12.5" height="6" rx="3.0" fill="#000"/>
<rect x="1135" y="426.4" width="6" height="1.2000000000000455" fill="#bbb"/>
<rect x="1132" y="478" width="12.5" height="6" rx="3.0" fill="#000"/>
<rect x="1135" y="480.4" width="6" height="1.2000000000000455" fill="#bbb"/>
<circle cx="1117.5" cy="463" r="1.6" fill="none" stroke="#000" stroke-width="1"/>
<text transform="translate(1134.7 453) rotate(-90) scale(0.62 1)" font-size="10" text-anchor="middle" dominant-baseline="central" font-weight="normal" fill="#000" font-family="Liberation Sans" stroke="#000" stroke-width="0.4">J904</text>
<rect x="1026.2" y="458.6" width="15.4" height="15.7" fill="none" stroke="#000" stroke-width="1.6"/>
<circle cx="1029.5" cy="462" r="1.3" fill="none" stroke="#000" stroke-width="0.9"/>
<rect x="1032" y="463" width="4" height="7" fill="#333"/>
<rect x="1023" y="479.5" width="21" height="4.0" fill="#000"/>
<rect x="1026" y="476.4" width="14" height="10.800000000000011" fill="#000"/>
<rect x="1029" y="479" width="8" height="5.5" fill="#fff"/>
<rect x="1030.5" y="480.8" width="5.0" height="2.0" fill="#333"/>
<rect x="1025" y="489.6" width="14" height="7.399999999999977" fill="none" stroke="#000" stroke-width="1.5"/>
<rect x="1027.8" y="491.82" width="8.4" height="2.959999999999991" fill="#333"/>
<rect x="1019" y="500" width="13" height="5" fill="#000"/>
<rect x="1023" y="501" width="4" height="3" fill="#fff"/>
<rect x="1019" y="506" width="13" height="5" fill="#000"/>
<rect x="1023" y="507" width="4" height="3" fill="#fff"/>
<rect x="1035" y="501.5" width="7" height="13" fill="none" stroke="#000" stroke-width="1.5"/>
<rect x="1037" y="504" width="3" height="8" fill="#555"/>
<rect x="1024" y="512" width="5" height="8" rx="2.0" fill="#0a0a0a"/>
<rect x="1026.0" y="514.4" width="1.0" height="3.2" fill="#777"/>
<rect x="1031" y="516" width="4.5" height="7" rx="1.8" fill="#0a0a0a"/>
<rect x="1032.8" y="518.1" width="0.9" height="2.8000000000000003" fill="#777"/>
<rect x="1050" y="512" width="4" height="8" rx="1.6" fill="#0a0a0a"/>
<rect x="1051.6" y="514.4" width="0.8" height="3.2" fill="#777"/>
<rect x="1054.3" y="512" width="4.0" height="8" rx="1.6" fill="#0a0a0a"/>
<rect x="1055.8999999999999" y="514.4" width="0.8" height="3.2" fill="#777"/>
<rect x="1023" y="525" width="13" height="8" fill="none" stroke="#000" stroke-width="1.5"/>
<rect x="1025.6" y="527.4" width="7.8" height="3.2" fill="#333"/>
<rect x="1038" y="520" width="12" height="8" fill="none" stroke="#000" stroke-width="1.5"/>
<rect x="1040.4" y="522.4" width="7.199999999999999" height="3.2" fill="#333"/>
<rect x="1038.0" y="527.5" width="5.5" height="3.5" rx="1.4000000000000001" fill="#0a0a0a"/>
<rect x="1039.65" y="528.9" width="2.2" height="0.7000000000000001" fill="#777"/>
<rect x="1043.8" y="527.5" width="5.5" height="3.5" rx="1.4000000000000001" fill="#0a0a0a"/>
<rect x="1045.45" y="528.9" width="2.2" height="0.7000000000000001" fill="#777"/>
<rect x="1038.0" y="531" width="5.5" height="3.5" rx="1.4000000000000001" fill="#0a0a0a"/>
<rect x="1039.65" y="532.4" width="2.2" height="0.7000000000000001" fill="#777"/>
<rect x="1043.8" y="531" width="5.5" height="3.5" rx="1.4000000000000001" fill="#0a0a0a"/>
<rect x="1045.45" y="532.4" width="2.2" height="0.7000000000000001" fill="#777"/>
<rect x="1048" y="527" width="4" height="6" fill="#000"/>
<line x1="1050" y1="528.5" x2="1058" y2="528.5" stroke="#000" stroke-width="1.2"/>
<rect x="1048" y="534" width="3.5" height="4" fill="#000"/>
<rect x="1067.6" y="521.4" width="92.90000000000009" height="47.60000000000002" fill="none" stroke="#000" stroke-width="1.6"/>
<rect x="1107" y="524" width="13.5" height="6.5" rx="3.25" fill="#000"/>
<rect x="1110" y="526.5" width="7" height="1.5" fill="#ccc"/>
<rect x="1129" y="524" width="13.5" height="6.5" rx="3.25" fill="#000"/>
<rect x="1132" y="526.5" width="7" height="1.5" fill="#ccc"/>
<rect x="1129" y="561.5" width="13.5" height="6.5" rx="3.25" fill="#000"/>
<rect x="1132" y="564" width="7" height="1.5" fill="#ccc"/>
<text transform="translate(1112.5 542) scale(0.62 1)" font-size="10" text-anchor="middle" dominant-baseline="central" font-weight="normal" fill="#000" font-family="Liberation Sans" stroke="#000" stroke-width="0.45">J900</text>
<text transform="translate(1142 577) scale(0.6 1)" font-size="9.5" text-anchor="middle" dominant-baseline="central" font-weight="normal" fill="#000" font-family="Liberation Sans" stroke="#000" stroke-width="0.35">1</text>
<rect x="902.6" y="541" width="154.39999999999998" height="120.5" fill="none" stroke="#000" stroke-width="1.6"/>
<rect x="912" y="565.3" width="60" height="56.10000000000002" fill="none" stroke="#000" stroke-width="1.6"/>
<circle cx="968.5" cy="618" r="3" fill="#000"/>
<text transform="translate(942 593) scale(0.6 1)" font-size="10" text-anchor="middle" dominant-baseline="central" font-weight="normal" fill="#000" font-family="Liberation Sans" stroke="#000" stroke-width="0.45">MN100</text>
<rect x="1005" y="598.3" width="44.799999999999955" height="51.700000000000045" fill="none" stroke="#000" stroke-width="1.6"/>
<circle cx="1045" cy="603" r="3" fill="#fff" stroke="#000" stroke-width="1.2"/>
<text transform="translate(1028 624) rotate(-90) scale(0.6 1)" font-size="10" text-anchor="middle" dominant-baseline="central" font-weight="normal" fill="#000" font-family="Liberation Sans" stroke="#000" stroke-width="0.45">MA406</text>
<rect x="943.5" y="630.5" width="19.299999999999955" height="24.5" fill="none" stroke="#000" stroke-width="1.6"/>
<text transform="translate(953 642.5) rotate(-90) scale(0.6 1)" font-size="7.5" text-anchor="middle" dominant-baseline="central" font-weight="normal" fill="#000" font-family="Liberation Sans" stroke="#000" stroke-width="0.35">X900</text>
<line x1="965" y1="647" x2="966" y2="647" stroke="#000" stroke-width="0.6"/>
<rect x="937" y="551.5" width="8" height="4.0" rx="1.6" fill="#0a0a0a"/>
<rect x="939.4" y="553.1" width="3.2" height="0.8" fill="#777"/>
<rect x="934" y="557.5" width="8" height="4.0" rx="1.6" fill="#0a0a0a"/>
<rect x="936.4" y="559.1" width="3.2" height="0.8" fill="#777"/>
<rect x="956" y="550.5" width="6" height="3.5" rx="1.4000000000000001" fill="#0a0a0a"/>
<rect x="957.8" y="551.9" width="2.4000000000000004" height="0.7000000000000001" fill="#777"/>
<rect x="956" y="554.5" width="6" height="3.5" rx="1.4000000000000001" fill="#0a0a0a"/>
<rect x="957.8" y="555.9" width="2.4000000000000004" height="0.7000000000000001" fill="#777"/>
<rect x="988.5" y="546.5" width="4.5" height="7.0" rx="1.8" fill="#0a0a0a"/>
<rect x="990.3" y="548.6" width="0.9" height="2.8000000000000003" fill="#777"/>
<rect x="993.3" y="546.5" width="4.5" height="7.0" rx="1.8" fill="#0a0a0a"/>
<rect x="995.0999999999999" y="548.6" width="0.9" height="2.8000000000000003" fill="#777"/>
<rect x="988.5" y="554" width="4.5" height="6.5" rx="1.8" fill="#0a0a0a"/>
<rect x="990.3" y="555.95" width="0.9" height="2.6" fill="#777"/>
<rect x="993.3" y="554" width="4.5" height="6.5" rx="1.8" fill="#0a0a0a"/>
<rect x="995.0999999999999" y="555.95" width="0.9" height="2.6" fill="#777"/>
<rect x="989" y="556.5" width="8" height="4.100000000000023" rx="1.6400000000000092" fill="#0a0a0a"/>
<rect x="991.4" y="558.14" width="3.2" height="0.8200000000000046" fill="#777"/>
<rect x="998.3" y="550.3" width="13.700000000000045" height="7.2000000000000455" fill="none" stroke="#000" stroke-width="1.5"/>
<rect x="1001.04" y="552.4599999999999" width="8.220000000000027" height="2.8800000000000185" fill="#333"/>
<rect x="1014" y="548" width="7.7" height="13.3" fill="none" stroke="#000" stroke-width="1.5"/>
<rect x="1016" y="551" width="3.5" height="7" fill="#333"/>
<rect x="1024.0" y="547" width="4.5" height="6" rx="1.8" fill="#0a0a0a"/>
<rect x="1025.8" y="548.8" width="0.9" height="2.4000000000000004" fill="#777"/>
<rect x="1028.8" y="547" width="4.5" height="6" rx="1.8" fill="#0a0a0a"/>
<rect x="1030.6" y="548.8" width="0.9" height="2.4000000000000004" fill="#777"/>
<rect x="1024.0" y="553.5" width="4.5" height="6.0" rx="1.8" fill="#0a0a0a"/>
<rect x="1025.8" y="555.3" width="0.9" height="2.4000000000000004" fill="#777"/>
<rect x="1028.8" y="553.5" width="4.5" height="6.0" rx="1.8" fill="#0a0a0a"/>
<rect x="1030.6" y="555.3" width="0.9" height="2.4000000000000004" fill="#777"/>
<rect x="1024.0" y="560" width="4.5" height="6.5" rx="1.8" fill="#0a0a0a"/>
<rect x="1025.8" y="561.95" width="0.9" height="2.6" fill="#777"/>
<rect x="1028.8" y="560" width="4.5" height="6.5" rx="1.8" fill="#0a0a0a"/>
<rect x="1030.6" y="561.95" width="0.9" height="2.6" fill="#777"/>
<rect x="1033.2" y="545" width="5.599999999999909" height="31" fill="#000"/>
<rect x="1034.6" y="552" width="2.800000000000182" height="4" fill="#fff"/>
<rect x="1034.6" y="564" width="2.800000000000182" height="4" fill="#fff"/>
<rect x="1040" y="554.5" width="11" height="5.0" fill="none" stroke="#000" stroke-width="1.5"/>
<rect x="1042.2" y="556.0" width="6.6" height="2.0" fill="#333"/>
<rect x="1040" y="560.5" width="11" height="6.0" fill="none" stroke="#000" stroke-width="1.5"/>
<rect x="1042.2" y="562.3" width="6.6" height="2.4000000000000004" fill="#333"/>
<rect x="1003" y="563.5" width="11" height="5.0" fill="none" stroke="#000" stroke-width="1.5"/>
<rect x="1005.2" y="565.0" width="6.6" height="2.0" fill="#333"/>
<rect x="1017.0" y="562" width="7.2999999999999545" height="5" rx="2.0" fill="#0a0a0a"/>
<rect x="1019.1899999999999" y="564.0" width="2.919999999999982" height="1.0" fill="#777"/>
<rect x="1024.6" y="562" width="7.2999999999999545" height="5" rx="2.0" fill="#0a0a0a"/>
<rect x="1026.79" y="564.0" width="2.919999999999982" height="1.0" fill="#777"/>
<rect x="986" y="567" width="7" height="8" fill="#000"/>
<rect x="988" y="569" width="3" height="3" fill="#fff"/>
<rect x="994" y="567" width="8" height="8" fill="#000"/>
<rect x="996" y="569" width="3.5" height="3" fill="#fff"/>
<rect x="998" y="575" width="2.5" height="5" fill="#000"/>
<rect x="1003" y="571" width="7.5" height="4" rx="1.6" fill="#0a0a0a"/>
<rect x="1005.25" y="572.6" width="3.0" height="0.8" fill="#777"/>
<rect x="983.5" y="574" width="6" height="11" fill="none" stroke="#000" stroke-width="1.3"/>
<rect x="985" y="577" width="3" height="5" fill="#222"/>
<g transform="translate(981.5 592) rotate(-40)"><rect x="-6" y="-3" width="12" height="6" fill="#000"/><rect x="-4.5" y="-1.5" width="4" height="3" fill="#fff"/></g>
<rect x="1003" y="581" width="7.5" height="13.5" fill="none" stroke="#000" stroke-width="1.5"/>
<rect x="1005" y="585" width="3.5" height="5" fill="#333"/>
<rect x="1014" y="578.5" width="9" height="8.5" fill="#000"/>
<rect x="1016" y="580.5" width="5" height="3.5" fill="#fff"/>
<rect x="1014" y="588.0" width="8" height="3.7999999999999545" rx="1.5199999999999818" fill="#0a0a0a"/>
<rect x="1016.4" y="589.52" width="3.2" height="0.7599999999999909" fill="#777"/>
<rect x="1014" y="592.1" width="8" height="3.7999999999999545" rx="1.5199999999999818" fill="#0a0a0a"/>
<rect x="1016.4" y="593.62" width="3.2" height="0.7599999999999909" fill="#777"/>
<rect x="1025.0" y="583" width="4.2999999999999545" height="6" rx="1.719999999999982" fill="#0a0a0a"/>
<rect x="1026.72" y="584.8" width="0.859999999999991" height="2.4000000000000004" fill="#777"/>
<rect x="1029.6" y="583" width="4.2999999999999545" height="6" rx="1.719999999999982" fill="#0a0a0a"/>
<rect x="1031.32" y="584.8" width="0.859999999999991" height="2.4000000000000004" fill="#777"/>
<rect x="1034.2" y="583" width="4.2999999999999545" height="6" rx="1.719999999999982" fill="#0a0a0a"/>
<rect x="1035.92" y="584.8" width="0.859999999999991" height="2.4000000000000004" fill="#777"/>
<rect x="1038.8" y="583" width="4.2999999999999545" height="6" rx="1.719999999999982" fill="#0a0a0a"/>
<rect x="1040.52" y="584.8" width="0.859999999999991" height="2.4000000000000004" fill="#777"/>
<rect x="1025.0" y="589.5" width="4.2999999999999545" height="6.5" rx="1.719999999999982" fill="#0a0a0a"/>
<rect x="1026.72" y="591.45" width="0.859999999999991" height="2.6" fill="#777"/>
<rect x="1029.6" y="589.5" width="4.2999999999999545" height="6.5" rx="1.719999999999982" fill="#0a0a0a"/>
<rect x="1031.32" y="591.45" width="0.859999999999991" height="2.6" fill="#777"/>
<rect x="1034.2" y="589.5" width="4.2999999999999545" height="6.5" rx="1.719999999999982" fill="#0a0a0a"/>
<rect x="1035.92" y="591.45" width="0.859999999999991" height="2.6" fill="#777"/>
<rect x="1038.8" y="589.5" width="4.2999999999999545" height="6.5" rx="1.719999999999982" fill="#0a0a0a"/>
<rect x="1040.52" y="591.45" width="0.859999999999991" height="2.6" fill="#777"/>
<rect x="994.0" y="594" width="4.0" height="6" rx="1.6" fill="#0a0a0a"/>
<rect x="995.6" y="595.8" width="0.8" height="2.4000000000000004" fill="#777"/>
<rect x="998.3" y="594" width="4.0" height="6" rx="1.6" fill="#0a0a0a"/>
<rect x="999.9" y="595.8" width="0.8" height="2.4000000000000004" fill="#777"/>
<rect x="990.0" y="603.0" width="4.0" height="5.7999999999999545" rx="1.6" fill="#0a0a0a"/>
<rect x="991.6" y="604.74" width="0.8" height="2.319999999999982" fill="#777"/>
<rect x="994.2" y="603.0" width="4.0" height="5.7999999999999545" rx="1.6" fill="#0a0a0a"/>
<rect x="995.8000000000001" y="604.74" width="0.8" height="2.319999999999982" fill="#777"/>
<rect x="998.4" y="603.0" width="4.0" height="5.7999999999999545" rx="1.6" fill="#0a0a0a"/>
<rect x="1000.0" y="604.74" width="0.8" height="2.319999999999982" fill="#777"/>
<rect x="990.0" y="609.2" width="4.0" height="5.7999999999999545" rx="1.6" fill="#0a0a0a"/>
<rect x="991.6" y="610.94" width="0.8" height="2.319999999999982" fill="#777"/>
<rect x="994.2" y="609.2" width="4.0" height="5.7999999999999545" rx="1.6" fill="#0a0a0a"/>
<rect x="995.8000000000001" y="610.94" width="0.8" height="2.319999999999982" fill="#777"/>
<rect x="998.4" y="609.2" width="4.0" height="5.7999999999999545" rx="1.6" fill="#0a0a0a"/>
<rect x="1000.0" y="610.94" width="0.8" height="2.319999999999982" fill="#777"/>
<rect x="990.0" y="615.4" width="4.0" height="5.7999999999999545" rx="1.6" fill="#0a0a0a"/>
<rect x="991.6" y="617.14" width="0.8" height="2.319999999999982" fill="#777"/>
<rect x="994.2" y="615.4" width="4.0" height="5.7999999999999545" rx="1.6" fill="#0a0a0a"/>
<rect x="995.8000000000001" y="617.14" width="0.8" height="2.319999999999982" fill="#777"/>
<rect x="998.4" y="615.4" width="4.0" height="5.7999999999999545" rx="1.6" fill="#0a0a0a"/>
<rect x="1000.0" y="617.14" width="0.8" height="2.319999999999982" fill="#777"/>
<rect x="994.0" y="622" width="4.0" height="5.7000000000000455" rx="1.6" fill="#0a0a0a"/>
<rect x="995.6" y="623.71" width="0.8" height="2.2800000000000185" fill="#777"/>
<rect x="998.3" y="622" width="4.0" height="5.7000000000000455" rx="1.6" fill="#0a0a0a"/>
<rect x="999.9" y="623.71" width="0.8" height="2.2800000000000185" fill="#777"/>
<rect x="994.0" y="628" width="4.0" height="5.7000000000000455" rx="1.6" fill="#0a0a0a"/>
<rect x="995.6" y="629.71" width="0.8" height="2.2800000000000185" fill="#777"/>
<rect x="998.3" y="628" width="4.0" height="5.7000000000000455" rx="1.6" fill="#0a0a0a"/>
<rect x="999.9" y="629.71" width="0.8" height="2.2800000000000185" fill="#777"/>
<rect x="994.0" y="634" width="4.0" height="5.7000000000000455" rx="1.6" fill="#0a0a0a"/>
<rect x="995.6" y="635.71" width="0.8" height="2.2800000000000185" fill="#777"/>
<rect x="998.3" y="634" width="4.0" height="5.7000000000000455" rx="1.6" fill="#0a0a0a"/>
<rect x="999.9" y="635.71" width="0.8" height="2.2800000000000185" fill="#777"/>
<rect x="990.0" y="632.0" width="4.0" height="4.399999999999977" rx="1.6" fill="#0a0a0a"/>
<rect x="991.6" y="633.3199999999999" width="0.8" height="1.759999999999991" fill="#777"/>
<rect x="994.2" y="632.0" width="4.0" height="4.399999999999977" rx="1.6" fill="#0a0a0a"/>
<rect x="995.8000000000001" y="633.3199999999999" width="0.8" height="1.759999999999991" fill="#777"/>
<rect x="998.4" y="632.0" width="4.0" height="4.399999999999977" rx="1.6" fill="#0a0a0a"/>
<rect x="1000.0" y="633.3199999999999" width="0.8" height="1.759999999999991" fill="#777"/>
<rect x="990.0" y="636.6" width="4.0" height="4.399999999999977" rx="1.6" fill="#0a0a0a"/>
<rect x="991.6" y="637.9200000000001" width="0.8" height="1.759999999999991" fill="#777"/>
<rect x="994.2" y="636.6" width="4.0" height="4.399999999999977" rx="1.6" fill="#0a0a0a"/>
<rect x="995.8000000000001" y="637.9200000000001" width="0.8" height="1.759999999999991" fill="#777"/>
<rect x="998.4" y="636.6" width="4.0" height="4.399999999999977" rx="1.6" fill="#0a0a0a"/>
<rect x="1000.0" y="637.9200000000001" width="0.8" height="1.759999999999991" fill="#777"/>
<rect x="990.0" y="641.2" width="4.0" height="4.399999999999977" rx="1.6" fill="#0a0a0a"/>
<rect x="991.6" y="642.52" width="0.8" height="1.759999999999991" fill="#777"/>
<rect x="994.2" y="641.2" width="4.0" height="4.399999999999977" rx="1.6" fill="#0a0a0a"/>
<rect x="995.8000000000001" y="642.52" width="0.8" height="1.759999999999991" fill="#777"/>
<rect x="998.4" y="641.2" width="4.0" height="4.399999999999977" rx="1.6" fill="#0a0a0a"/>
<rect x="1000.0" y="642.52" width="0.8" height="1.759999999999991" fill="#777"/>
<rect x="990.0" y="645.8" width="4.0" height="4.399999999999977" rx="1.6" fill="#0a0a0a"/>
<rect x="991.6" y="647.1199999999999" width="0.8" height="1.759999999999991" fill="#777"/>
<rect x="994.2" y="645.8" width="4.0" height="4.399999999999977" rx="1.6" fill="#0a0a0a"/>
<rect x="995.8000000000001" y="647.1199999999999" width="0.8" height="1.759999999999991" fill="#777"/>
<rect x="998.4" y="645.8" width="4.0" height="4.399999999999977" rx="1.6" fill="#0a0a0a"/>
<rect x="1000.0" y="647.1199999999999" width="0.8" height="1.759999999999991" fill="#777"/>
<rect x="990.0" y="650.4" width="4.0" height="4.399999999999977" rx="1.6" fill="#0a0a0a"/>
<rect x="991.6" y="651.72" width="0.8" height="1.759999999999991" fill="#777"/>
<rect x="994.2" y="650.4" width="4.0" height="4.399999999999977" rx="1.6" fill="#0a0a0a"/>
<rect x="995.8000000000001" y="651.72" width="0.8" height="1.759999999999991" fill="#777"/>
<rect x="998.4" y="650.4" width="4.0" height="4.399999999999977" rx="1.6" fill="#0a0a0a"/>
<rect x="1000.0" y="651.72" width="0.8" height="1.759999999999991" fill="#777"/>
<rect x="1029" y="652" width="8" height="5" rx="2.0" fill="#0a0a0a"/>
<rect x="1031.4" y="654.0" width="3.2" height="1.0" fill="#777"/>
<rect x="920" y="633.5" width="4.5" height="6.5" rx="1.8" fill="#0a0a0a"/>
<rect x="921.8" y="635.45" width="0.9" height="2.6" fill="#777"/>
<rect x="932" y="634" width="5.5" height="7" rx="2.2" fill="#0a0a0a"/>
<rect x="934.2" y="636.1" width="1.1" height="2.8000000000000003" fill="#777"/>
<rect x="915.5" y="638.5" width="4.5" height="6.5" rx="1.8" fill="#0a0a0a"/>
<rect x="917.3" y="640.45" width="0.9" height="2.6" fill="#777"/>
<rect x="920.3" y="638.5" width="4.5" height="6.5" rx="1.8" fill="#0a0a0a"/>
<rect x="922.0999999999999" y="640.45" width="0.9" height="2.6" fill="#777"/>
<rect x="925.1" y="638.5" width="4.5" height="6.5" rx="1.8" fill="#0a0a0a"/>
<rect x="926.9" y="640.45" width="0.9" height="2.6" fill="#777"/>
<rect x="929.9" y="638.5" width="4.5" height="6.5" rx="1.8" fill="#0a0a0a"/>
<rect x="931.6999999999999" y="640.45" width="0.9" height="2.6" fill="#777"/>
<rect x="934.7" y="638.5" width="4.5" height="6.5" rx="1.8" fill="#0a0a0a"/>
<rect x="936.5" y="640.45" width="0.9" height="2.6" fill="#777"/>
<rect x="911.2" y="644.5" width="4.5" height="6.0" rx="1.8" fill="#0a0a0a"/>
<rect x="913.0" y="646.3" width="0.9" height="2.4000000000000004" fill="#777"/>
<rect x="916.0" y="644.5" width="4.5" height="6.0" rx="1.8" fill="#0a0a0a"/>
<rect x="917.8" y="646.3" width="0.9" height="2.4000000000000004" fill="#777"/>
<rect x="920.8000000000001" y="644.5" width="4.5" height="6.0" rx="1.8" fill="#0a0a0a"/>
<rect x="922.6" y="646.3" width="0.9" height="2.4000000000000004" fill="#777"/>
<rect x="925.6" y="644.5" width="4.5" height="6.0" rx="1.8" fill="#0a0a0a"/>
<rect x="927.4" y="646.3" width="0.9" height="2.4000000000000004" fill="#777"/>
<rect x="930.4000000000001" y="644.5" width="4.5" height="6.0" rx="1.8" fill="#0a0a0a"/>
<rect x="932.2" y="646.3" width="0.9" height="2.4000000000000004" fill="#777"/>
<rect x="935.2" y="644.5" width="4.5" height="6.0" rx="1.8" fill="#0a0a0a"/>
<rect x="937.0" y="646.3" width="0.9" height="2.4000000000000004" fill="#777"/>
<rect x="911.2" y="650.6" width="4.5" height="6.0" rx="1.8" fill="#0a0a0a"/>
<rect x="913.0" y="652.4" width="0.9" height="2.4000000000000004" fill="#777"/>
<rect x="916.0" y="650.6" width="4.5" height="6.0" rx="1.8" fill="#0a0a0a"/>
<rect x="917.8" y="652.4" width="0.9" height="2.4000000000000004" fill="#777"/>
<rect x="920.8000000000001" y="650.6" width="4.5" height="6.0" rx="1.8" fill="#0a0a0a"/>
<rect x="922.6" y="652.4" width="0.9" height="2.4000000000000004" fill="#777"/>
<rect x="925.6" y="650.6" width="4.5" height="6.0" rx="1.8" fill="#0a0a0a"/>
<rect x="927.4" y="652.4" width="0.9" height="2.4000000000000004" fill="#777"/>
<rect x="930.4000000000001" y="650.6" width="4.5" height="6.0" rx="1.8" fill="#0a0a0a"/>
<rect x="932.2" y="652.4" width="0.9" height="2.4000000000000004" fill="#777"/>
<rect x="935.2" y="650.6" width="4.5" height="6.0" rx="1.8" fill="#0a0a0a"/>
<rect x="937.0" y="652.4" width="0.9" height="2.4000000000000004" fill="#777"/>
<text transform="translate(893 638) rotate(-90) scale(0.6 1)" font-size="9" text-anchor="middle" dominant-baseline="central" font-weight="normal" fill="#000" font-family="Liberation Sans" stroke="#000" stroke-width="0.45">BL100</text>
<circle cx="892.6" cy="660.3" r="4" fill="none" stroke="#000" stroke-width="1.6"/>
<text transform="translate(892.6 660.5)" font-size="5" text-anchor="middle" dominant-baseline="central" font-weight="bold" fill="#000" font-family="Liberation Sans">E</text>
<rect x="1064.0" y="583.5" width="4.0" height="6.5" rx="1.6" fill="#0a0a0a"/>
<rect x="1065.6" y="585.45" width="0.8" height="2.6" fill="#777"/>
<rect x="1068.2" y="583.5" width="4.0" height="6.5" rx="1.6" fill="#0a0a0a"/>
<rect x="1069.8" y="585.45" width="0.8" height="2.6" fill="#777"/>
<rect x="1072.4" y="583.5" width="4.0" height="6.5" rx="1.6" fill="#0a0a0a"/>
<rect x="1074.0" y="585.45" width="0.8" height="2.6" fill="#777"/>
<rect x="1076.6" y="583.5" width="4.0" height="6.5" rx="1.6" fill="#0a0a0a"/>
<rect x="1078.1999999999998" y="585.45" width="0.8" height="2.6" fill="#777"/>
<rect x="1087.5" y="578" width="13" height="6" fill="none" stroke="#000" stroke-width="1.3"/>
<rect x="1090" y="580" width="8" height="2" fill="#333"/>
<rect x="1100.5" y="578" width="6" height="14" fill="none" stroke="#000" stroke-width="1.3"/>
<rect x="1102" y="581" width="3" height="8" fill="#333"/>
<rect x="1087" y="584" width="13" height="9" fill="#000"/>
<rect x="1089" y="586" width="2" height="5" fill="#fff"/>
<rect x="1092.5" y="586" width="2.0" height="5" fill="#fff"/>
<rect x="1096" y="586" width="2" height="5" fill="#fff"/>
<rect x="1081" y="583" width="6" height="12" fill="none" stroke="#000" stroke-width="1.3"/>
<rect x="1083" y="586" width="2" height="6" fill="#333"/>
<rect x="1061" y="592.5" width="5" height="7.5" rx="2.0" fill="#0a0a0a"/>
<rect x="1063.0" y="594.75" width="1.0" height="3.0" fill="#777"/>
<rect x="1061" y="600.3" width="5" height="7.5" rx="2.0" fill="#0a0a0a"/>
<rect x="1063.0" y="602.55" width="1.0" height="3.0" fill="#777"/>
<rect x="1071" y="594" width="4.5" height="8" rx="1.8" fill="#0a0a0a"/>
<rect x="1072.8" y="596.4" width="0.9" height="3.2" fill="#777"/>
<rect x="1081" y="597" width="10" height="17.5" fill="none" stroke="#000" stroke-width="1.8"/>
<rect x="1084" y="600" width="4" height="9" fill="#222"/>
<rect x="1085" y="610.5" width="2" height="2.5" fill="#000"/>
<rect x="1062" y="612" width="9" height="4.5" rx="1.8" fill="#0a0a0a"/>
<rect x="1064.7" y="613.8" width="3.6" height="0.9" fill="#777"/>
<rect x="1098.0" y="595.0" width="4.0" height="6.2000000000000455" rx="1.6" fill="#0a0a0a"/>
<rect x="1099.6" y="596.86" width="0.8" height="2.480000000000018" fill="#777"/>
<rect x="1102.2" y="595.0" width="4.0" height="6.2000000000000455" rx="1.6" fill="#0a0a0a"/>
<rect x="1103.8" y="596.86" width="0.8" height="2.480000000000018" fill="#777"/>
<rect x="1098.0" y="601.5" width="4.0" height="6.2000000000000455" rx="1.6" fill="#0a0a0a"/>
<rect x="1099.6" y="603.36" width="0.8" height="2.480000000000018" fill="#777"/>
<rect x="1102.2" y="601.5" width="4.0" height="6.2000000000000455" rx="1.6" fill="#0a0a0a"/>
<rect x="1103.8" y="603.36" width="0.8" height="2.480000000000018" fill="#777"/>
<rect x="1102.5" y="608.0" width="4.2000000000000455" height="6.399999999999977" rx="1.6800000000000184" fill="#0a0a0a"/>
<rect x="1104.18" y="609.92" width="0.8400000000000092" height="2.559999999999991" fill="#777"/>
<rect x="1106.9" y="608.0" width="4.2000000000000455" height="6.399999999999977" rx="1.6800000000000184" fill="#0a0a0a"/>
<rect x="1108.5800000000002" y="609.92" width="0.8400000000000092" height="2.559999999999991" fill="#777"/>
<rect x="1102.5" y="614.6" width="4.2000000000000455" height="6.399999999999977" rx="1.6800000000000184" fill="#0a0a0a"/>
<rect x="1104.18" y="616.52" width="0.8400000000000092" height="2.559999999999991" fill="#777"/>
<rect x="1106.9" y="614.6" width="4.2000000000000455" height="6.399999999999977" rx="1.6800000000000184" fill="#0a0a0a"/>
<rect x="1108.5800000000002" y="616.52" width="0.8400000000000092" height="2.559999999999991" fill="#777"/>
<rect x="1102.5" y="621.2" width="4.2000000000000455" height="6.399999999999977" rx="1.6800000000000184" fill="#0a0a0a"/>
<rect x="1104.18" y="623.12" width="0.8400000000000092" height="2.559999999999991" fill="#777"/>
<rect x="1106.9" y="621.2" width="4.2000000000000455" height="6.399999999999977" rx="1.6800000000000184" fill="#0a0a0a"/>
<rect x="1108.5800000000002" y="623.12" width="0.8400000000000092" height="2.559999999999991" fill="#777"/>
<rect x="1102.5" y="627.8" width="4.2000000000000455" height="6.399999999999977" rx="1.6800000000000184" fill="#0a0a0a"/>
<rect x="1104.18" y="629.7199999999999" width="0.8400000000000092" height="2.559999999999991" fill="#777"/>
<rect x="1106.9" y="627.8" width="4.2000000000000455" height="6.399999999999977" rx="1.6800000000000184" fill="#0a0a0a"/>
<rect x="1108.5800000000002" y="629.7199999999999" width="0.8400000000000092" height="2.559999999999991" fill="#777"/>
<rect x="1102.5" y="634.4" width="4.2000000000000455" height="6.399999999999977" rx="1.6800000000000184" fill="#0a0a0a"/>
<rect x="1104.18" y="636.3199999999999" width="0.8400000000000092" height="2.559999999999991" fill="#777"/>
<rect x="1106.9" y="634.4" width="4.2000000000000455" height="6.399999999999977" rx="1.6800000000000184" fill="#0a0a0a"/>
<rect x="1108.5800000000002" y="636.3199999999999" width="0.8400000000000092" height="2.559999999999991" fill="#777"/>
<rect x="1100.5" y="641.0" width="4.2000000000000455" height="6.399999999999977" rx="1.6800000000000184" fill="#0a0a0a"/>
<rect x="1102.18" y="642.92" width="0.8400000000000092" height="2.559999999999991" fill="#777"/>
<rect x="1104.9" y="641.0" width="4.2000000000000455" height="6.399999999999977" rx="1.6800000000000184" fill="#0a0a0a"/>
<rect x="1106.5800000000002" y="642.92" width="0.8400000000000092" height="2.559999999999991" fill="#777"/>
<rect x="1083.5" y="628.5" width="3.0" height="3.5" fill="#000"/>
<rect x="1062.0" y="645" width="4.5" height="6.5" rx="1.8" fill="#0a0a0a"/>
<rect x="1063.8" y="646.95" width="0.9" height="2.6" fill="#777"/>
<rect x="1066.7" y="645" width="4.5" height="6.5" rx="1.8" fill="#0a0a0a"/>
<rect x="1068.5" y="646.95" width="0.9" height="2.6" fill="#777"/>
<rect x="1071.4" y="645" width="4.5" height="6.5" rx="1.8" fill="#0a0a0a"/>
<rect x="1073.2" y="646.95" width="0.9" height="2.6" fill="#777"/>
<rect x="1076.1" y="645" width="4.5" height="6.5" rx="1.8" fill="#0a0a0a"/>
<rect x="1077.8999999999999" y="646.95" width="0.9" height="2.6" fill="#777"/>
<rect x="1062.0" y="651" width="4.5" height="6.5" rx="1.8" fill="#0a0a0a"/>
<rect x="1063.8" y="652.95" width="0.9" height="2.6" fill="#777"/>
<rect x="1066.7" y="651" width="4.5" height="6.5" rx="1.8" fill="#0a0a0a"/>
<rect x="1068.5" y="652.95" width="0.9" height="2.6" fill="#777"/>
<rect x="1071.4" y="651" width="4.5" height="6.5" rx="1.8" fill="#0a0a0a"/>
<rect x="1073.2" y="652.95" width="0.9" height="2.6" fill="#777"/>
<rect x="1076.1" y="651" width="4.5" height="6.5" rx="1.8" fill="#0a0a0a"/>
<rect x="1077.8999999999999" y="652.95" width="0.9" height="2.6" fill="#777"/>
<rect x="1070" y="642" width="8" height="4" rx="1.6" fill="#0a0a0a"/>
<rect x="1072.4" y="643.6" width="3.2" height="0.8" fill="#777"/>
<text transform="translate(1132 605) scale(0.6 1)" font-size="10" text-anchor="middle" dominant-baseline="central" font-weight="normal" fill="#000" font-family="Liberation Sans" stroke="#000" stroke-width="0.45">BL300</text>
<text transform="translate(1131 632) scale(0.6 1)" font-size="10" text-anchor="middle" dominant-baseline="central" font-weight="normal" fill="#000" font-family="Liberation Sans" stroke="#000" stroke-width="0.45">BL301</text>
<rect x="1156" y="684.7" width="51.59999999999991" height="19.899999999999977" fill="none" stroke="#000" stroke-width="1.8"/>
<line x1="1156" y1="695" x2="1207.6" y2="695" stroke="#000" stroke-width="1.4"/>
<text transform="translate(1165.5 689.8) scale(0.9 1)" font-size="4.3" text-anchor="middle" dominant-baseline="central" font-weight="bold" fill="#000" font-family="Liberation Sans" stroke="#000" stroke-width="0.25">SCALE</text>
<text transform="translate(1190 689.5) scale(0.75 1)" font-size="9.5" text-anchor="middle" dominant-baseline="central" font-weight="normal" fill="#000" font-family="Liberation Sans" stroke="#000" stroke-width="0.2">2</text>
<path d="M1167 700 L1180 697 V703 Z" fill="none" stroke="#000" stroke-width="1.6"/><path d="M1170 700 L1180 698.5 V701.5 Z" fill="none" stroke="#000" stroke-width="0.8"/><line x1="1180" y1="700" x2="1187" y2="700" stroke="#000" stroke-width="1.5"/><path d="M1184.5 700 L1190 695 L1195.5 700 L1190 705 Z" fill="#000"/>
<rect x="880" y="708.5" width="31.399999999999977" height="76.10000000000002" fill="none" stroke="#000" stroke-width="1.8"/>
<line x1="893.3" y1="708.5" x2="893.3" y2="784.6" stroke="#000" stroke-width="1.6"/>
<line x1="880" y1="716.1" x2="911.4" y2="716.1" stroke="#000" stroke-width="1.5"/>
<line x1="880" y1="723.7" x2="911.4" y2="723.7" stroke="#000" stroke-width="1.5"/>
<line x1="880" y1="731.3" x2="911.4" y2="731.3" stroke="#000" stroke-width="1.5"/>
<line x1="880" y1="738.9" x2="911.4" y2="738.9" stroke="#000" stroke-width="1.5"/>
<line x1="880" y1="746.5" x2="911.4" y2="746.5" stroke="#000" stroke-width="1.5"/>
<line x1="880" y1="754.1" x2="911.4" y2="754.1" stroke="#000" stroke-width="1.5"/>
<line x1="880" y1="761.7" x2="911.4" y2="761.7" stroke="#000" stroke-width="1.5"/>
<line x1="880" y1="769.3" x2="911.4" y2="769.3" stroke="#000" stroke-width="1.5"/>
<line x1="880" y1="776.9" x2="911.4" y2="776.9" stroke="#000" stroke-width="1.5"/>
<text transform="translate(886.5 765)" font-size="4.5" text-anchor="middle" dominant-baseline="central" font-weight="bold" fill="#000" font-family="Liberation Sans" stroke="#000" stroke-width="0.25">B</text>
<text transform="translate(902.3 765) scale(0.62 1)" font-size="3.6" text-anchor="middle" dominant-baseline="central" font-weight="bold" fill="#000" font-family="Liberation Sans" stroke="#000" stroke-width="0.25">05/03/2018</text>
<text transform="translate(886.5 772.5)" font-size="4.5" text-anchor="middle" dominant-baseline="central" font-weight="bold" fill="#000" font-family="Liberation Sans" stroke="#000" stroke-width="0.25">A</text>
<text transform="translate(902.3 772.5) scale(0.62 1)" font-size="3.6" text-anchor="middle" dominant-baseline="central" font-weight="bold" fill="#000" font-family="Liberation Sans" stroke="#000" stroke-width="0.25">27/02/2018</text>
<text transform="translate(886.5 780)" font-size="4.6" text-anchor="middle" dominant-baseline="central" font-weight="bold" fill="#000" font-family="Liberation Sans" stroke="#000" stroke-width="0.25">VER</text>
<text transform="translate(902.3 780)" font-size="4.6" text-anchor="middle" dominant-baseline="central" font-weight="bold" fill="#000" font-family="Liberation Sans" stroke="#000" stroke-width="0.25">DATE</text>
<text transform="translate(875.3 762.8) rotate(-90) scale(0.85 1)" font-size="5.2" text-anchor="middle" dominant-baseline="central" font-weight="bold" fill="#000" font-family="Liberation Sans" stroke="#000" stroke-width="0.25" letter-spacing="0.3">DRAWING A3H</text>
<rect x="911.4" y="704.8" width="296.19999999999993" height="79.80000000000007" fill="none" stroke="#000" stroke-width="1.8"/>
<line x1="911.4" y1="721.6" x2="1207.6" y2="721.6" stroke="#000" stroke-width="1.8"/>
<line x1="911.4" y1="758.2" x2="1207.6" y2="758.2" stroke="#000" stroke-width="1.8"/>
<line x1="936.5" y1="704.8" x2="936.5" y2="721.6" stroke="#000" stroke-width="1.5"/>
<line x1="1016.7" y1="704.8" x2="1016.7" y2="721.6" stroke="#000" stroke-width="1.5"/>
<line x1="1057.8" y1="704.8" x2="1057.8" y2="721.6" stroke="#000" stroke-width="1.5"/>
<line x1="1083.2" y1="704.8" x2="1083.2" y2="721.6" stroke="#000" stroke-width="1.5"/>
<line x1="1165.2" y1="704.8" x2="1165.2" y2="721.6" stroke="#000" stroke-width="1.5"/>
<text transform="translate(923.8 716.3) scale(0.9 1)" font-size="3.8" text-anchor="middle" dominant-baseline="central" font-weight="bold" fill="#000" font-family="Liberation Sans" stroke="#000" stroke-width="0.25" letter-spacing="0.2">MODIFIED</text>
<text transform="translate(946 708.5)" font-size="4.3" text-anchor="middle" dominant-baseline="central" font-weight="bold" fill="#000" font-family="Liberation Sans" stroke="#000" stroke-width="0.25">NAME</text>
<line x1="938" y1="719.8" x2="1013" y2="719.8" stroke="#333" stroke-width="1.8"/>
<text transform="translate(1036.5 708.8)" font-size="4.3" text-anchor="middle" dominant-baseline="central" font-weight="bold" fill="#000" font-family="Liberation Sans" stroke="#000" stroke-width="0.25">DATE</text>
<text transform="translate(1037.3 714.6) scale(0.95 1)" font-size="5.6" text-anchor="middle" dominant-baseline="central" font-weight="bold" fill="#000" font-family="Liberation Sans" stroke="#000" stroke-width="0.1" letter-spacing="0.55">15/03/2018</text>
<line x1="1018" y1="719.8" x2="1056" y2="719.8" stroke="#333" stroke-width="1.8"/>
<text transform="translate(1070.5 716.6) scale(0.9 1)" font-size="3.8" text-anchor="middle" dominant-baseline="central" font-weight="bold" fill="#000" font-family="Liberation Sans" stroke="#000" stroke-width="0.25">CHECKED</text>
<text transform="translate(1094 708.5)" font-size="4.3" text-anchor="middle" dominant-baseline="central" font-weight="bold" fill="#000" font-family="Liberation Sans" stroke="#000" stroke-width="0.25">NAME</text>
<line x1="1086" y1="719.8" x2="1157" y2="719.8" stroke="#333" stroke-width="1.8"/>
<text transform="translate(1187 708.8)" font-size="4.3" text-anchor="middle" dominant-baseline="central" font-weight="bold" fill="#000" font-family="Liberation Sans" stroke="#000" stroke-width="0.25">DATE</text>
<text transform="translate(1187.3 714.6) scale(0.95 1)" font-size="5.6" text-anchor="middle" dominant-baseline="central" font-weight="bold" fill="#000" font-family="Liberation Sans" stroke="#000" stroke-width="0.1" letter-spacing="0.55">15/03/2018</text>
<line x1="1169" y1="719.8" x2="1205" y2="719.8" stroke="#333" stroke-width="1.8"/>
<line x1="1126.6" y1="721.6" x2="1126.6" y2="758.2" stroke="#000" stroke-width="1.3"/>
<line x1="1127.8" y1="721.6" x2="1127.8" y2="758.2" stroke="#000" stroke-width="1.3"/>
<text transform="translate(942 729) scale(0.95 1)" font-size="4.6" text-anchor="middle" dominant-baseline="central" font-weight="bold" fill="#000" font-family="Liberation Sans" stroke="#000" stroke-width="0.25" letter-spacing="0.35">LIBELLE</text>
<line x1="955" y1="730.2" x2="1122" y2="730.2" stroke="#000" stroke-width="1.2"/>
<line x1="955" y1="738.4" x2="1122" y2="738.4" stroke="#333" stroke-width="1.8"/>
<text transform="translate(931.8 746) scale(0.9 1)" font-size="4.6" text-anchor="middle" dominant-baseline="central" font-weight="bold" fill="#000" font-family="Liberation Sans" stroke="#000" stroke-width="0.25" letter-spacing="0.25">DENOMINATION</text>
<text transform="translate(957 743.8) scale(0.84 1)" font-size="8.6" text-anchor="start" dominant-baseline="central" font-weight="normal" fill="#000" font-family="Liberation Sans" stroke="#000" stroke-width="0.12" letter-spacing="1.25">ELEC BOARD MMI DL270 V00</text>
<line x1="955" y1="747.4" x2="1122" y2="747.4" stroke="#000" stroke-width="1.2"/>
<line x1="955" y1="755.4" x2="1122" y2="755.4" stroke="#333" stroke-width="1.8"/>
<line x1="1127.3" y1="746.6" x2="1207.6" y2="746.6" stroke="#000" stroke-width="1.6"/>
<text transform="translate(1129.5 736.5) skewX(-6)" font-size="12.5" font-weight="bold" font-style="italic" font-family="Liberation Sans" letter-spacing="-0.6" stroke="#000" stroke-width="0.9">SageReal</text>
<rect x="1155" y="738.5" width="28" height="5.5" fill="#000"/>
<rect x="1158" y="740" width="2" height="2.5" fill="#888"/>
<rect x="1164" y="740" width="2" height="2.5" fill="#888"/>
<rect x="1170" y="740" width="2" height="2.5" fill="#888"/>
<rect x="1176" y="740" width="2" height="2.5" fill="#888"/>
<path d="M1203 726 L1192 739 M1197 726 L1190 732 M1205 735 L1194 743 M1191 733 L1203 741 M1196 730 L1200 736" stroke="#000" stroke-width="3.6" stroke-linecap="round" fill="none"/>
<text transform="translate(1142.5 753.5)" font-size="4" text-anchor="middle" dominant-baseline="central" font-weight="bold" fill="#000" font-family="Liberation Sans" stroke="#000" stroke-width="0.25">SHEET</text>
<text transform="translate(1181.5 752.4) scale(0.9 1)" font-size="10" text-anchor="middle" dominant-baseline="central" font-weight="normal" fill="#000" font-family="Liberation Sans" letter-spacing="1.2">1/2</text>
<line x1="1164" y1="756.6" x2="1194" y2="756.6" stroke="#000" stroke-width="1.1"/>
<line x1="1056.1" y1="758.2" x2="1056.1" y2="784.6" stroke="#000" stroke-width="1.6"/>
<line x1="1077" y1="758.2" x2="1077" y2="784.6" stroke="#000" stroke-width="1.6"/>
<line x1="1145.6" y1="758.2" x2="1145.6" y2="784.6" stroke="#000" stroke-width="1.6"/>
<line x1="1167.2" y1="758.2" x2="1167.2" y2="784.6" stroke="#000" stroke-width="1.6"/>
<line x1="1188.4" y1="758.2" x2="1188.4" y2="784.6" stroke="#000" stroke-width="1.6"/>
<line x1="1077" y1="769.3" x2="1207.6" y2="769.3" stroke="#000" stroke-width="2.0"/>
<text transform="translate(941.5 765.5) scale(0.95 1)" font-size="4.4" text-anchor="middle" dominant-baseline="central" font-weight="bold" fill="#000" font-family="Liberation Sans" stroke="#000" stroke-width="0.25" letter-spacing="0.25">R.FAB/P.N.</text>
<line x1="959" y1="766.3" x2="1049" y2="766.3" stroke="#000" stroke-width="1.2"/>
<text transform="translate(944.5 778.5) skewX(-6)" font-size="11.3" font-weight="bold" font-style="italic" font-family="Liberation Sans" letter-spacing="-0.6" stroke="#000" stroke-width="0.9">SageReal</text>
<rect x="966" y="779.5" width="21" height="5.0" fill="#000"/>
<rect x="969" y="781" width="1.5" height="2" fill="#888"/>
<rect x="974" y="781" width="1.5" height="2" fill="#888"/>
<rect x="979" y="781" width="1.5" height="2" fill="#888"/>
<rect x="983" y="781" width="1.5" height="2" fill="#888"/>
<path d="M1010 768 L999 781 M1004 768 L997 774 M1012 777 L1001 785 M998 775 L1010 783 M1003 772 L1007 778" stroke="#000" stroke-width="3.6" stroke-linecap="round" fill="none"/>
<text transform="translate(1066.5 766.6)" font-size="3.8" text-anchor="middle" dominant-baseline="central" font-weight="bold" fill="#000" font-family="Liberation Sans" stroke="#000" stroke-width="0.25">SIZE</text>
<text transform="translate(1067 777.2) scale(0.72 1)" font-size="10.5" text-anchor="middle" dominant-baseline="central" font-weight="normal" fill="#000" font-family="Liberation Sans" stroke="#000" stroke-width="0.1" letter-spacing="0.6">A3</text>
<text transform="translate(1111 777) scale(0.95 1)" font-size="4.0" text-anchor="middle" dominant-baseline="central" font-weight="bold" fill="#000" font-family="Liberation Sans" stroke="#000" stroke-width="0.25" letter-spacing="0.3">DRAWING NUMBER</text>
<text transform="translate(1156 777.6)" font-size="4.0" text-anchor="middle" dominant-baseline="central" font-weight="bold" fill="#000" font-family="Liberation Sans" stroke="#000" stroke-width="0.25">TYPE</text>
<text transform="translate(1177.5 777.6)" font-size="4.0" text-anchor="middle" dominant-baseline="central" font-weight="bold" fill="#000" font-family="Liberation Sans" stroke="#000" stroke-width="0.25">PART</text>
<text transform="translate(1198 777.6)" font-size="3.8" text-anchor="middle" dominant-baseline="central" font-weight="bold" fill="#000" font-family="Liberation Sans" stroke="#000" stroke-width="0.25">VERS.</text>
<text transform="translate(1117 787.7) scale(0.9 1)" font-size="3.9" text-anchor="middle" dominant-baseline="central" font-weight="bold" fill="#000" font-family="Liberation Sans" stroke="#000" stroke-width="0.25" letter-spacing="0.15">DOCUMENT SGR ALL RIGHTS RESERVED. REPRODUCTION AND DISCLOSURE PROHIBITED</text></svg>
</body></html>
